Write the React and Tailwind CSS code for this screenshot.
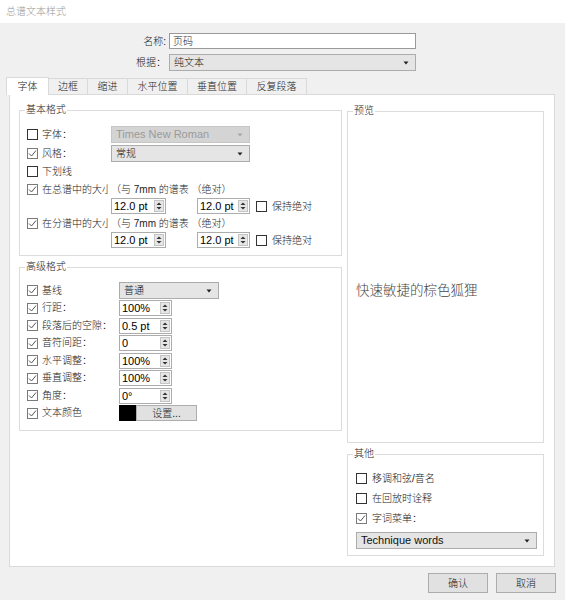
import React from "react";

function Check({ checked }) {
  return (
    <span
      className={
        "w-[11px] h-[11px] shrink-0 bg-white border flex items-center justify-center " +
        (checked ? "border-[#7a7a7a]" : "border-[#333333]")
      }
    >
      {checked && (
        <svg width="9" height="9" viewBox="0 0 9 9">
          <path d="M1 4.5 L3.5 7 L8 1.5" fill="none" stroke="#555" strokeWidth="1" />
        </svg>
      )}
    </span>
  );
}

function Arrow({ color = "#222" }) {
  return (
    <svg width="6" height="4" viewBox="0 0 6 4" className="shrink-0">
      <path d="M0.5 0.5 L5.5 0.5 L3 3.5 Z" fill={color} />
    </svg>
  );
}

function Select({ text, w, disabled, latin }) {
  return (
    <div
      className={
        "h-[17px] flex items-center justify-between pl-[4px] pr-[6px] border " +
        w +
        (disabled
          ? " bg-[#d4d4d4] border-[#c6c6c6] text-[#9a9a9a]"
          : " bg-[#e5e5e5] border-[#acacac] text-[#111]") +
        (latin ? " text-[11px]" : " text-[10px]")
      }
    >
      <span className="leading-[15px]">{text}</span>
      <Arrow color={disabled ? "#a8a8a8" : "#222"} />
    </div>
  );
}

function Spin({ value, w }) {
  return (
    <div
      className={
        "h-[16px] flex items-center bg-white border border-[#acacac] pl-[2px] pr-[1px] " + w
      }
    >
      <span className="flex-1 text-[11px] leading-[14px] text-black">{value}</span>
      <div className="w-[10px] h-[12px] bg-[#e6e6e6] border border-[#c4c4c4] flex items-center justify-center">
        <svg width="8" height="10" viewBox="0 0 8 10">
          <path d="M1.5 4 L4 1.5 L6.5 4 Z" fill="#333" />
          <path d="M1.5 6 L4 8.5 L6.5 6 Z" fill="#333" />
        </svg>
      </div>
    </div>
  );
}

function Group({ label, className, children }) {
  return (
    <div className={"relative border border-[#dcdcdc] " + className}>
      <span className="absolute -top-[7px] left-[5px] bg-white px-[1px] text-[10px] leading-[12px]">
        {label}
      </span>
      {children}
    </div>
  );
}

function Tab({ label, w, active }) {
  if (active) {
    return (
      <div
        className={
          "relative z-10 h-[18px] -mb-px bg-white border-x border-t border-[#d9d9d9] flex items-center justify-center text-[10px] " +
          w
        }
      >
        {label}
      </div>
    );
  }
  return (
    <div
      className={
        "h-[16px] bg-[#f0f0f0] border-t border-r border-[#d9d9d9] flex items-center justify-center text-[10px] " +
        w
      }
    >
      {label}
    </div>
  );
}

function AdvRow({ checked = true, label, children }) {
  return (
    <div className="h-[17.5px] flex items-center pl-[7px]">
      <Check checked={checked} />
      <span className="ml-[4px] w-[77px] text-[10px] leading-[12px] whitespace-nowrap">{label}</span>
      {children}
    </div>
  );
}

export default function App() {
  return (
    <div className="w-[565px] h-[600px] bg-[#f0f0f0] font-['Liberation_Sans','Noto_Sans_CJK_SC',sans-serif] font-light text-[#1a1a1a] overflow-hidden">
      {/* title bar */}
      <div className="h-[23px] bg-white flex items-center pl-[6px] text-[10px] text-[#9a9a9a]">
        总谱文本样式
      </div>

      {/* name row */}
      <div className="mt-[10px] flex items-center h-[16px]">
        <span className="w-[166px] text-right text-[10px]">名称:</span>
        <div className="ml-[3px] w-[247px] h-[16px] bg-white border border-[#9a9a9a] flex items-center pl-[3px] text-[10px]">
          页码
        </div>
      </div>
      <div className="mt-[5px] flex items-center h-[17px]">
        <span className="w-[166px] text-right text-[10px]">根据：</span>
        <div className="ml-[3px]">
          <Select text="纯文本" w="w-[247px]" />
        </div>
      </div>

      {/* tabs */}
      <div className="mt-[6px] h-[17px] pl-[6px] flex items-end">
        <Tab label="字体" w="w-[43px]" active />
        <Tab label="边框" w="w-[39px]" />
        <Tab label="缩进" w="w-[40px]" />
        <Tab label="水平位置" w="w-[60px]" />
        <Tab label="垂直位置" w="w-[59px]" />
        <Tab label="反复段落" w="w-[60px]" />
      </div>

      {/* panel */}
      <div className="ml-[9px] w-[546px] h-[473px] bg-white border border-[#d9d9d9] flex pt-[15px] pl-[9px]">
        {/* left column */}
        <div className="w-[323px] flex flex-col">
          <Group label="基本格式" className="h-[146px] pt-[15px]">
            <div className="h-[17px] flex items-center pl-[7px]">
              <Check />
              <span className="ml-[4px] w-[69px] text-[10px]">字体：</span>
              <Select text="Times New Roman" w="w-[139px]" disabled latin />
            </div>
            <div className="mt-[2px] h-[17px] flex items-center pl-[7px]">
              <Check checked />
              <span className="ml-[4px] w-[69px] text-[10px]">风格：</span>
              <Select text="常规" w="w-[139px]" />
            </div>
            <div className="h-[19px] flex items-center pl-[7px]">
              <Check />
              <span className="ml-[4px] w-[69px] text-[10px]">下划线</span>
            </div>
            <div className="h-[17px] flex items-center pl-[7px]">
              <Check checked />
              <span className="ml-[4px] w-[66px] mr-[3px] text-[10px] whitespace-nowrap overflow-hidden">
                在总谱中的大小
              </span>
              <span className="text-[10px] whitespace-nowrap">（与 7mm 的谱表 （绝对）</span>
            </div>
            <div className="h-[16px] flex items-center pl-[91px]">
              <Spin value="12.0 pt" w="w-[55px]" />
              <div className="ml-[31px]">
                <Spin value="12.0 pt" w="w-[53px]" />
              </div>
              <div className="ml-[6px]">
                <Check />
              </div>
              <span className="ml-[5px] text-[10px]">保持绝对</span>
            </div>
            <div className="h-[18px] flex items-center pl-[7px]">
              <Check checked />
              <span className="ml-[4px] w-[66px] mr-[3px] text-[10px] whitespace-nowrap overflow-hidden">
                在分谱中的大小
              </span>
              <span className="text-[10px] whitespace-nowrap">（与 7mm 的谱表 （绝对）</span>
            </div>
            <div className="h-[16px] flex items-center pl-[91px]">
              <Spin value="12.0 pt" w="w-[55px]" />
              <div className="ml-[31px]">
                <Spin value="12.0 pt" w="w-[53px]" />
              </div>
              <div className="ml-[6px]">
                <Check />
              </div>
              <span className="ml-[5px] text-[10px]">保持绝对</span>
            </div>
          </Group>

          <Group label="高级格式" className="mt-[11px] h-[164px] pt-[14px]">
            <AdvRow label="基线">
              <Select text="普通" w="w-[100px]" />
            </AdvRow>
            <AdvRow label="行距：">
              <Spin value="100%" w="w-[53px]" />
            </AdvRow>
            <AdvRow label="段落后的空隙：">
              <Spin value="0.5 pt" w="w-[53px]" />
            </AdvRow>
            <AdvRow label="音符间距：">
              <Spin value="0" w="w-[53px]" />
            </AdvRow>
            <AdvRow label="水平调整：">
              <Spin value="100%" w="w-[53px]" />
            </AdvRow>
            <AdvRow label="垂直调整：">
              <Spin value="100%" w="w-[53px]" />
            </AdvRow>
            <AdvRow label="角度：">
              <Spin value="0°" w="w-[53px]" />
            </AdvRow>
            <AdvRow label="文本颜色">
              <div className="w-[17px] h-[16px] bg-black" />
              <div className="w-[61px] h-[16px] bg-[#e1e1e1] border border-[#adadad] flex items-center justify-center text-[10px]">
                设置...
              </div>
            </AdvRow>
          </Group>
        </div>

        {/* right column */}
        <div className="ml-[5px] w-[197px] flex flex-col">
          <Group label="预览" className="mt-[1px] h-[332px] pt-[169px] pl-[8px]">
            <div className="text-[13.5px] leading-[17px] text-[#444] font-['Noto_Sans_CJK_SC',serif]">
              快速敏捷的棕色狐狸
            </div>
          </Group>
          <Group label="其他" className="mt-[11px] h-[102px] pt-[13px] pl-[8px]">
            <div className="h-[20px] flex items-center">
              <Check />
              <span className="ml-[5px] text-[10px]">移调和弦/音名</span>
            </div>
            <div className="h-[20px] flex items-center">
              <Check />
              <span className="ml-[5px] text-[10px]">在回放时诠释</span>
            </div>
            <div className="h-[21px] flex items-center">
              <Check checked />
              <span className="ml-[5px] text-[10px]">字词菜单：</span>
            </div>
            <div className="mt-[3px]">
              <Select text="Technique words" w="w-[181px]" latin />
            </div>
          </Group>
        </div>
      </div>

      {/* buttons */}
      <div className="mt-[6px] flex justify-end gap-[8px] pr-[9px]">
        <div className="w-[60px] h-[20px] bg-[#e1e1e1] border border-[#adadad] flex items-center justify-center text-[10px]">
          确认
        </div>
        <div className="w-[60px] h-[20px] bg-[#e1e1e1] border border-[#adadad] flex items-center justify-center text-[10px]">
          取消
        </div>
      </div>
    </div>
  );
}
